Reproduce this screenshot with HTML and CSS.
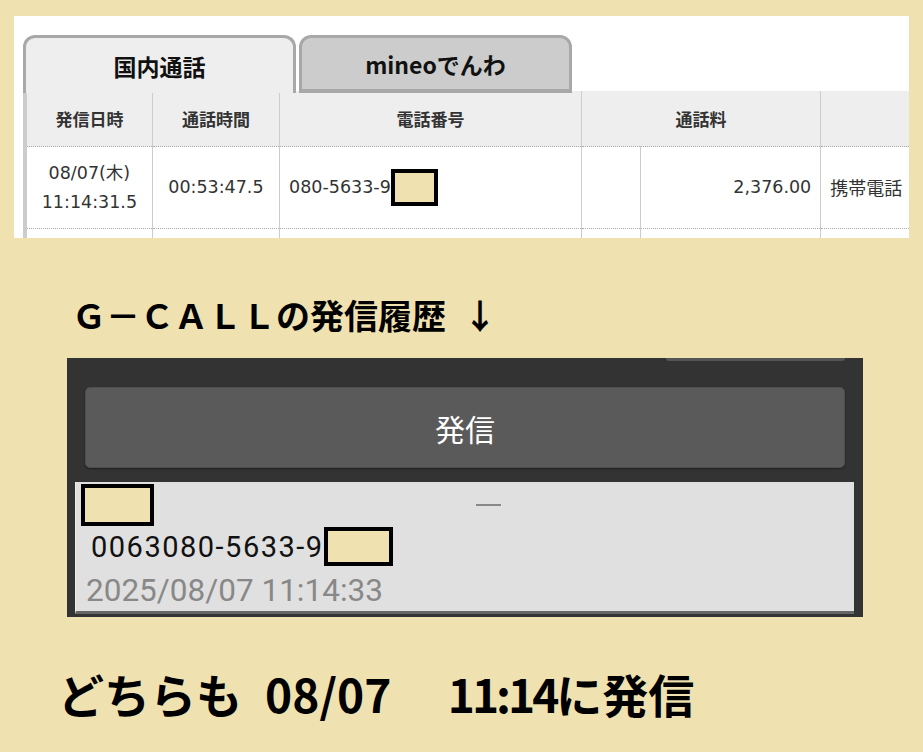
FILE: index.html
```html
<!DOCTYPE html>
<html lang="ja">
  <head>
    <meta charset="UTF-8">
    <title>発信履歴</title>
    <link rel="stylesheet" href="styles.css">
  </head>
  <body>
    <!-- mineo call log (top cut) -->
    <div class="sheet">
      <div class="tabs">
        <div class="tab tab-active">国内通話</div>
        <div class="tab">mineoでんわ</div>
      </div>
      <table class="calls">
        <colgroup>
          <col class="col-date">
          <col class="col-time">
          <col class="col-number">
          <col class="col-blank">
          <col class="col-fee">
          <col class="col-kind">
        </colgroup>
        <tr>
          <th>発信日時</th>
          <th>通話時間</th>
          <th>電話番号</th>
          <th colspan="2">通話料</th>
          <th></th>
        </tr>
        <tr>
          <td>08/07(木)<br>11:14:31.5</td>
          <td>00:53:47.5</td>
          <td class="number">080-5633-9<span class="mask mask-sm"></span></td>
          <td></td>
          <td class="fee">2,376.00</td>
          <td class="kind">携帯電話</td>
        </tr>
        <tr>
          <td></td><td></td><td></td><td></td><td></td><td></td>
        </tr>
      </table>
    </div>

    <h2 class="caption">Ｇ－ＣＡＬＬの発信履歴&ensp;↓</h2>

    <!-- G-CALL app screenshot -->
    <div class="phone">
      <div class="phone-top"><span class="phone-tab"></span></div>
      <div class="dial-btn">発信</div>
      <div class="call-item">
        <div class="call-head">
          <span class="mask mask-lg"></span>
          <span class="call-dash"></span>
        </div>
        <div class="call-number">0063080-5633-9<span class="mask mask-md"></span></div>
        <div class="call-date">2025/08/07 11:14:33</div>
      </div>
    </div>

    <p class="summary">どちらも&ensp;08/07　 <span class="tight">11:14</span>に発信</p>
  </body>
</html>
```

FILE: styles.css
```css
body {
  margin: 0;
  background: #efe2b0;
  font-family: "Noto Sans CJK JP", sans-serif;
  color: #000;
}

.sheet {
  width: 886px;
  height: 203px;
  margin: 16px 0 0 14px;
  padding: 19px 0 0 9px;
  background: #fff;
  overflow: hidden;
}

.tabs {
  display: flex;
  gap: 3px;
  position: relative;
  z-index: 1;
  margin-bottom: -2px;
}

.tab {
  box-sizing: border-box;
  width: 273px;
  height: 58px;
  border: 3px solid #a8a8a8;
  border-bottom-width: 4px;
  border-radius: 12px 12px 0 0;
  background: #ccc;
  display: flex;
  align-items: center;
  justify-content: center;
  font-size: 23px;
  font-weight: 700;
  color: #111;
}

.tab-active {
  background: #eee;
  border-bottom: 0;
}

.calls {
  width: 888px;
  table-layout: fixed;
  border-collapse: collapse;
  border-left: 4px solid #ccc;
  font-family: "DejaVu Sans", "Noto Sans CJK JP", sans-serif;
  font-size: 17.5px;
  color: #333;
}

.col-date { width: 127px; }
.col-time { width: 127px; }
.col-number { width: 301px; }
.col-blank { width: 59px; }
.col-fee { width: 180px; }
.col-kind { width: 90px; }

.calls th {
  height: 55px;
  padding: 0;
  background: #eee;
  border-left: 1px solid #ccc;
  border-bottom: 1px dotted #aaa;
  font-family: "Noto Sans CJK JP", sans-serif;
  font-size: 17px;
  font-weight: 700;
}

.calls td {
  height: 81px;
  padding: 0;
  border-left: 1px solid #ccc;
  border-bottom: 1px dotted #aaa;
  text-align: center;
  line-height: 29px;
  white-space: nowrap;
}

.calls td.number {
  text-align: left;
  padding-left: 9px;
}

.calls td.fee {
  text-align: right;
  padding-right: 9px;
}

.calls td.kind {
  text-align: left;
  padding-left: 9px;
  font-family: "Noto Sans CJK JP", sans-serif;
  font-size: 18px;
}

.mask {
  display: inline-block;
  box-sizing: border-box;
  border: 4px solid #000;
  background: #efe2b0;
  vertical-align: middle;
}

.mask-sm { width: 47px; height: 37px; }
.mask-md { width: 69px; height: 39px; }
.mask-lg { width: 73px; height: 42px; }

.caption {
  margin: 57px 0 0 72px;
  font-size: 34px;
  line-height: 40px;
  font-weight: 700;
  white-space: pre;
}

.phone {
  box-sizing: border-box;
  width: 796px;
  height: 259px;
  margin: 23px 0 0 67px;
  padding: 0 18px;
  background: #333;
}

.phone-top {
  display: flex;
  justify-content: flex-end;
}

.phone-tab {
  width: 179px;
  height: 3px;
  background: #555;
  border-radius: 0 0 3px 3px;
}

.dial-btn {
  box-sizing: border-box;
  height: 81px;
  margin-top: 26px;
  border: 1px solid #4e4e4e;
  border-radius: 5px;
  background: #5a5a5a;
  box-shadow: 0 1px 2px rgba(0, 0, 0, 0.4);
  display: flex;
  align-items: center;
  justify-content: center;
  color: #fff;
  font-size: 30px;
}

.call-item {
  box-sizing: border-box;
  height: 132px;
  margin: 14px -9px 0 -10px;
  padding: 2px 0 0 5px;
  background: #e0e0e0;
  border-left: 1px solid #ececec;
  border-bottom: 3px solid #666;
  font-family: Roboto, sans-serif;
}

.call-head {
  display: flex;
  align-items: center;
}

.call-dash {
  width: 25px;
  height: 2px;
  margin-left: 322px;
  background: #888;
}

.call-number {
  display: flex;
  align-items: center;
  margin: 1px 0 0 10px;
  font-size: 29px;
  letter-spacing: 1.5px;
  color: #111;
}

.call-date {
  margin: 7px 0 0 5px;
  font-size: 31.5px;
  line-height: 36px;
  color: #888;
}

.summary {
  margin: 48px 0 0 58px;
  font-size: 46px;
  line-height: 56px;
  font-weight: 700;
  white-space: pre;
}

.summary .tight {
  letter-spacing: -3px;
}
```
